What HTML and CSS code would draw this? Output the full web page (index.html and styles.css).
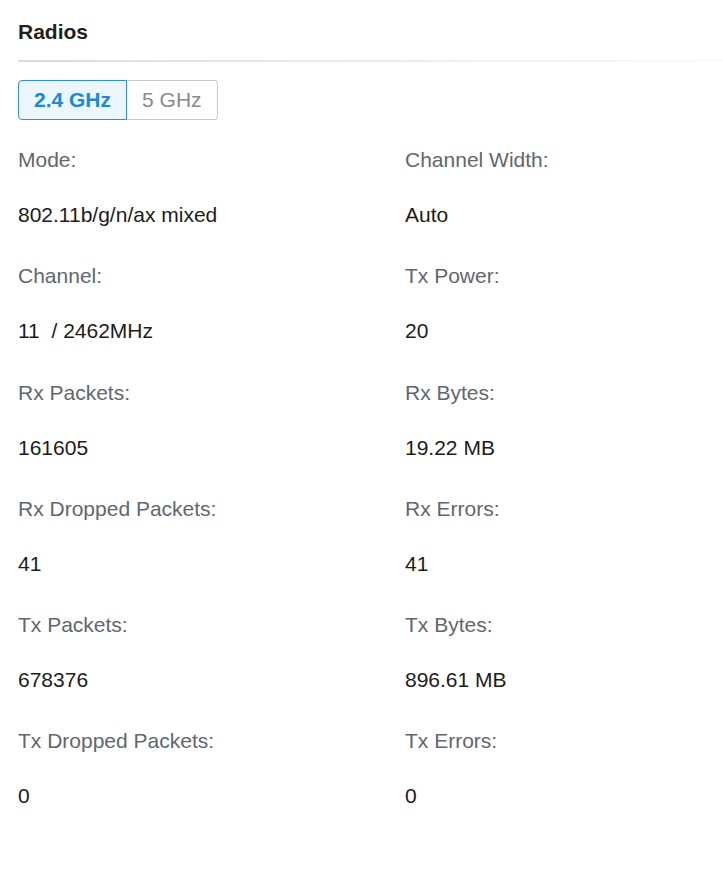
FILE: index.html
```html
<!DOCTYPE html>
<html>
<head>
<meta charset="utf-8">
<link rel="stylesheet" href="styles.css">
</head>
<body>
<div class="panel">
  <h2 class="title">Radios</h2>
  <div class="divider"></div>
  <div class="tabs">
    <button class="tab active">2.4 GHz</button>
    <button class="tab">5 GHz</button>
  </div>
  <div class="grid">
    <div class="field"><div class="label">Mode:</div><div class="value">802.11b/g/n/ax mixed</div></div>
    <div class="field"><div class="label">Channel Width:</div><div class="value">Auto</div></div>
    <div class="field"><div class="label">Channel:</div><div class="value">11&nbsp; / 2462MHz</div></div>
    <div class="field"><div class="label">Tx Power:</div><div class="value">20</div></div>
    <div class="field"><div class="label">Rx Packets:</div><div class="value">161605</div></div>
    <div class="field"><div class="label">Rx Bytes:</div><div class="value">19.22 MB</div></div>
    <div class="field"><div class="label">Rx Dropped Packets:</div><div class="value">41</div></div>
    <div class="field"><div class="label">Rx Errors:</div><div class="value">41</div></div>
    <div class="field"><div class="label">Tx Packets:</div><div class="value">678376</div></div>
    <div class="field"><div class="label">Tx Bytes:</div><div class="value">896.61 MB</div></div>
    <div class="field"><div class="label">Tx Dropped Packets:</div><div class="value">0</div></div>
    <div class="field"><div class="label">Tx Errors:</div><div class="value">0</div></div>
  </div>
</div>
</body>
</html>
```
FILE: styles.css
```css
html, body {
  margin: 0;
  padding: 0;
  background: #ffffff;
}
body {
  font-family: "Liberation Sans", Arial, sans-serif;
  font-size: 21px;
  color: #1c1c1c;
}
.panel {
  padding: 20px 0 0 18px;
}
.title {
  margin: 0;
  font-size: 21px;
  font-weight: bold;
  line-height: 24px;
  color: #1f1f1f;
}
.divider {
  margin-top: 16px;
  height: 2px;
  background: linear-gradient(to right, #dcdcdc, #fbfbfb);
}
.tabs {
  display: flex;
  margin-top: 18px;
}
.tab {
  font-family: "Liberation Sans", Arial, sans-serif;
  font-size: 21px;
  height: 40px;
  padding: 0 15px;
  margin: 0;
  background: #ffffff;
  border: 1px solid #c9c9c9;
  color: #8a8a8a;
  line-height: 38px;
}
.tab:first-child {
  border-radius: 4px 0 0 4px;
}
.tab:last-child {
  border-radius: 0 4px 4px 0;
  border-left: none;
}
.tab.active {
  background: #ebf6fe;
  border-color: #2a8fdc;
  color: #1a8ad8;
  font-weight: bold;
}
.grid {
  margin-top: 28px;
  display: grid;
  grid-template-columns: 387px 1fr;
  row-gap: 37.25px;
}
.label {
  line-height: 24px;
  color: #5f6770;
}
.value {
  margin-top: 31px;
  line-height: 24px;
  color: #1c1c1c;
}
```
